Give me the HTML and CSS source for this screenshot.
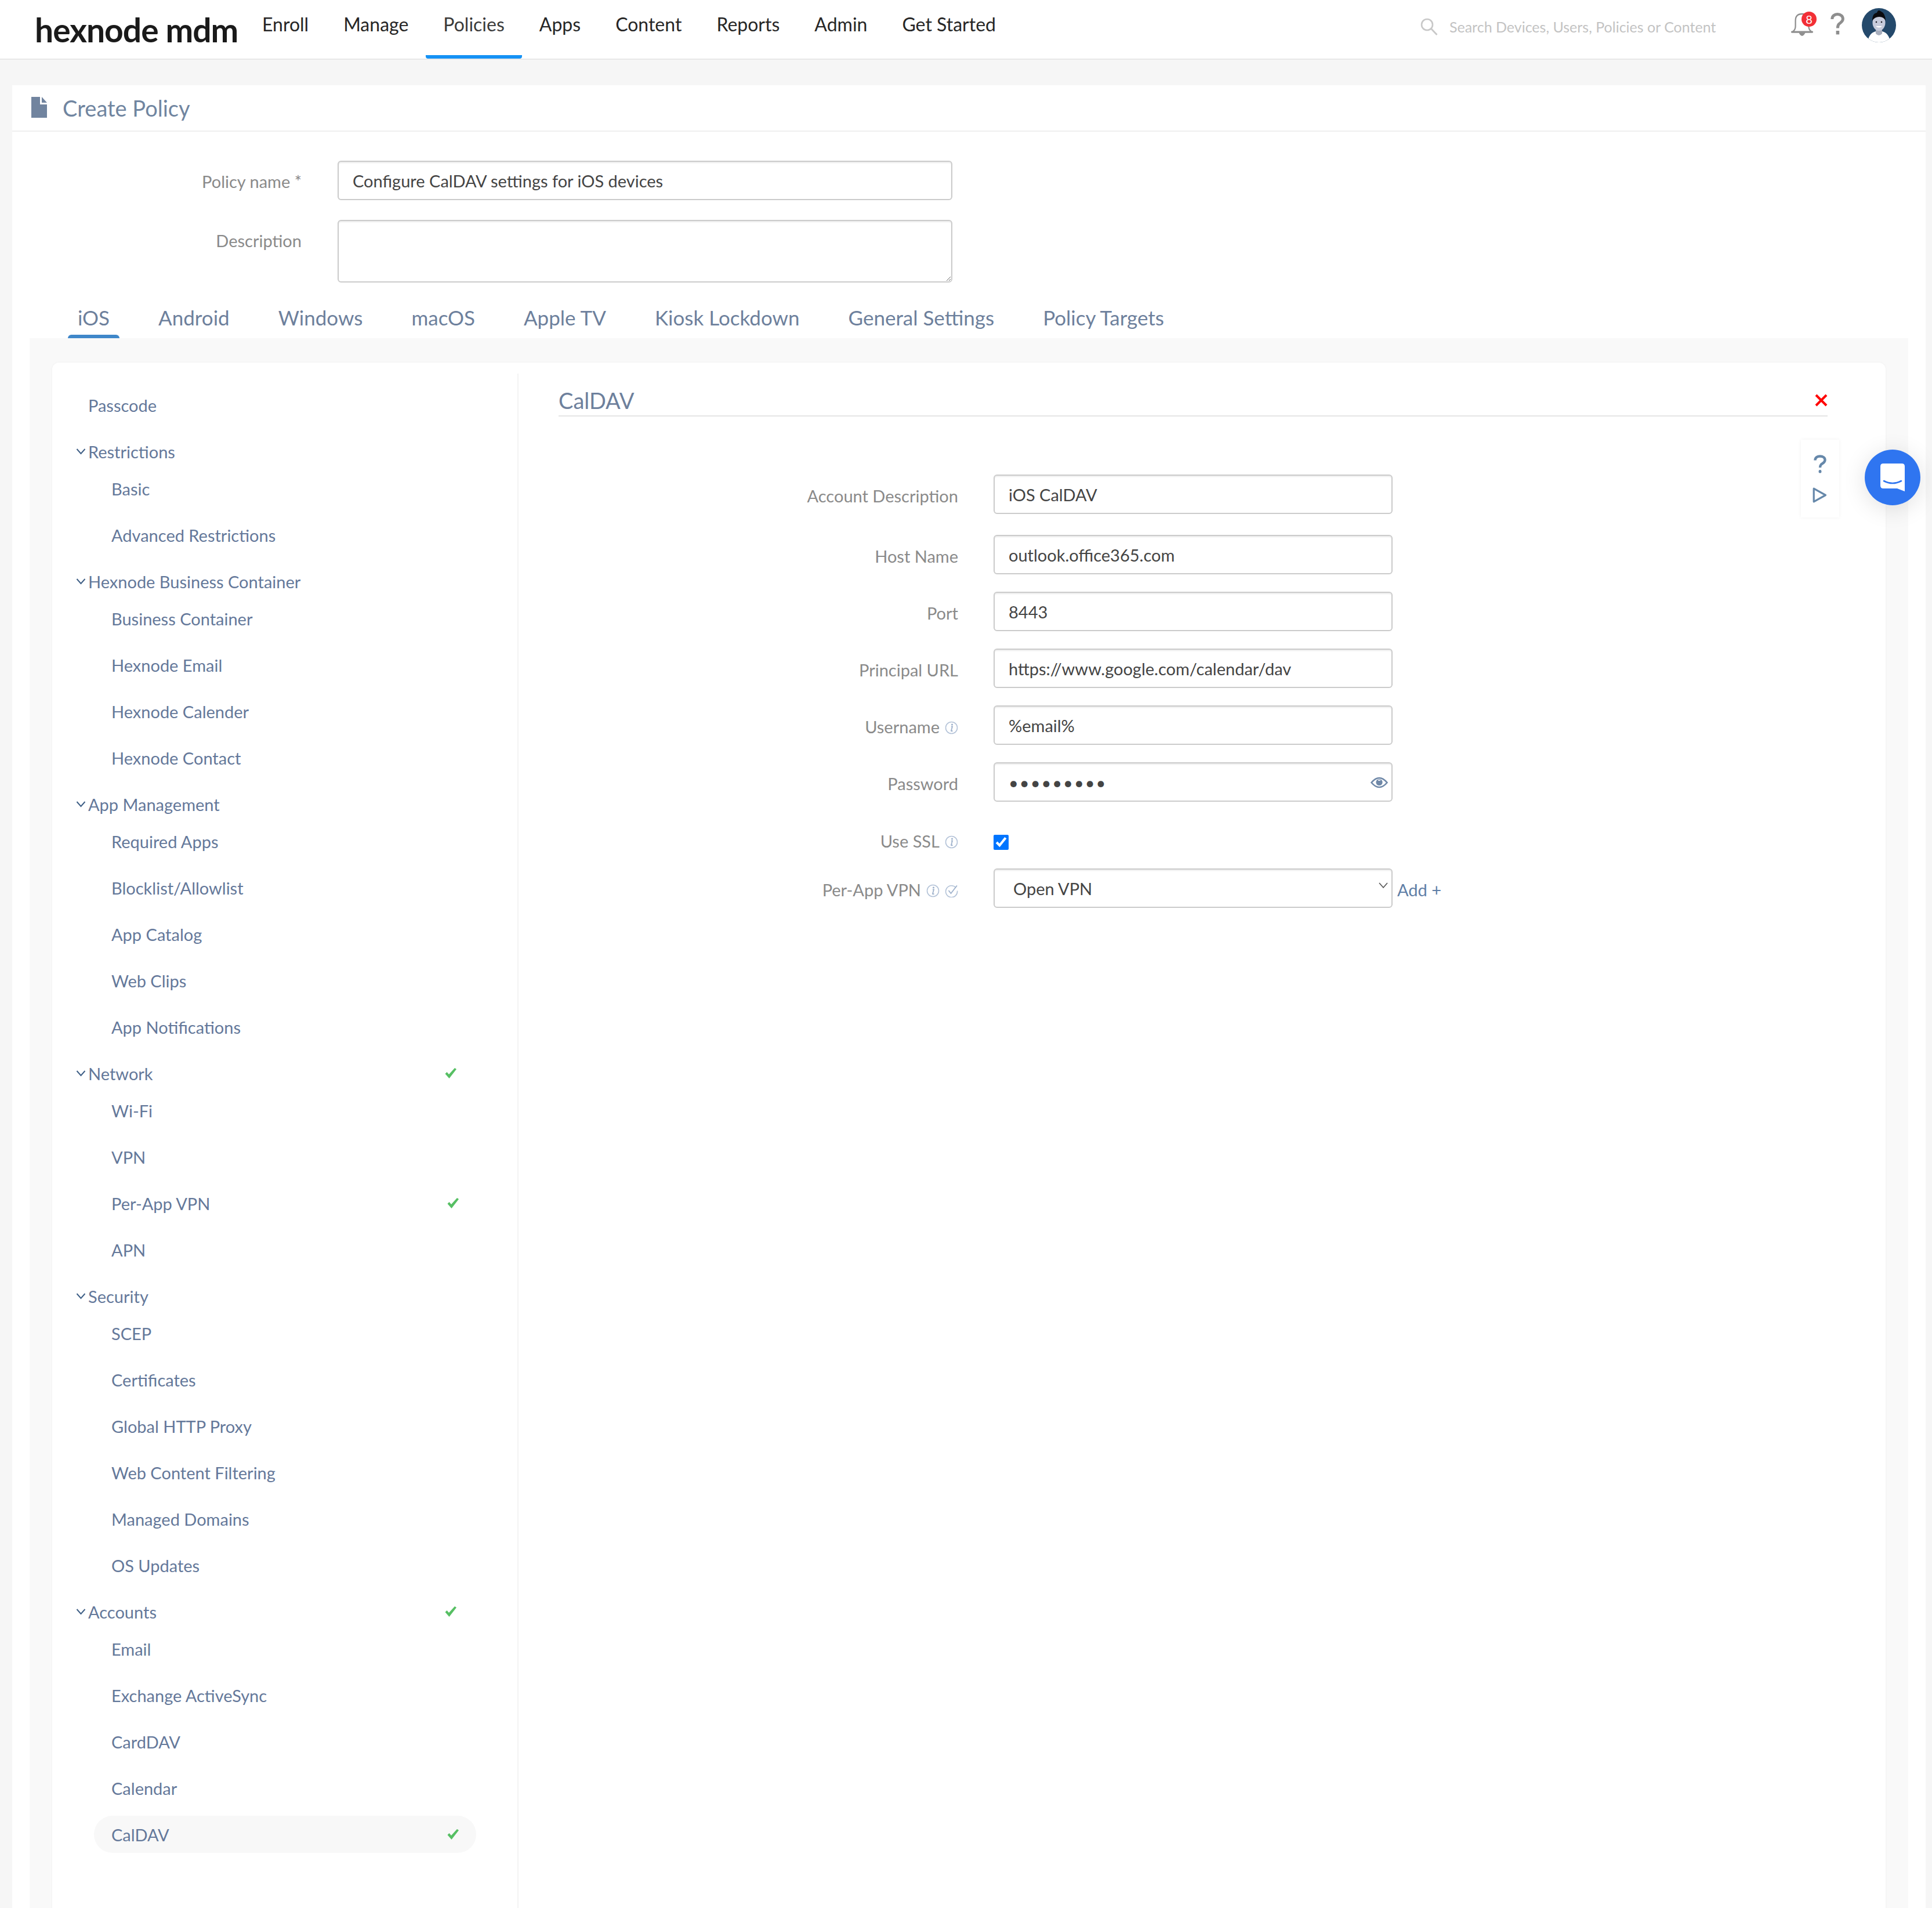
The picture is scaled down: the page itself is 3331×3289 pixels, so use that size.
FILE: index.html
```html
<!DOCTYPE html>
<html lang="en">
<head>
<meta charset="utf-8">
<title>Create Policy - hexnode mdm</title>
<link rel="stylesheet" href="styles.css">
</head>
<body>
<svg class="defs" width="0" height="0" aria-hidden="true">
  <symbol id="chev" viewBox="0 0 17 12"><path d="M1.5 2 L8.5 10 L15.5 2" fill="none" stroke="#3f5f86" stroke-width="2"/></symbol>
  <symbol id="tick" viewBox="0 0 22 20"><path d="M1.5 11 L4.5 8 L8 12 L18 1 L21 3 L8.5 19 Z" fill="#56bf63"/></symbol>
  <symbol id="info" viewBox="0 0 23 23"><circle cx="11.5" cy="11.5" r="10" fill="none" stroke="#b4c3d8" stroke-width="1.6"/><circle cx="12.5" cy="6" r="1.6" fill="#9fb2cc"/><path d="M11 9.5 L13 9.5 L11 16.5 Q10.8 18 13.5 16.6" fill="none" stroke="#9fb2cc" stroke-width="1.8"/></symbol>
  <symbol id="verify" viewBox="0 0 23 23"><path d="M19 6 A10 10 0 1 0 21.5 11.5" fill="none" stroke="#b4c3d8" stroke-width="1.6"/><path d="M6.5 11 L10.5 16 L21 2.5" fill="none" stroke="#9fb2cc" stroke-width="1.8"/></symbol>
</svg>

<header class="topbar">
  <div class="logo">hexnode mdm</div>
  <nav class="mainnav">
    <a class="navitem">Enroll</a>
    <a class="navitem">Manage</a>
    <a class="navitem active">Policies</a>
    <a class="navitem">Apps</a>
    <a class="navitem">Content</a>
    <a class="navitem">Reports</a>
    <a class="navitem">Admin</a>
    <a class="navitem">Get Started</a>
  </nav>
  <div class="search">
    <svg class="search-icon" viewBox="0 0 30 30"><circle cx="11.5" cy="11.5" r="9.5" fill="none" stroke="#c8c8c8" stroke-width="2.6"/><path d="M18.5 18.5 L28.5 29" stroke="#c8c8c8" stroke-width="2.8" fill="none"/></svg>
    <span class="search-text">Search Devices, Users, Policies or Content</span>
  </div>
  <div class="bell">
    <svg class="bell-icon" viewBox="0 0 40 44"><path d="M3 34 Q8 31 8 24 L8 14 Q8 2 20 2 Q32 2 32 14 L32 24 Q32 31 37 34" fill="none" stroke="#8f8f8f" stroke-width="2.4"/><rect x="0" y="33" width="40" height="3.4" rx="1.5" fill="#8f8f8f"/><path d="M14 36 Q20 48 26 36 Z" fill="#8f8f8f"/></svg>
    <span class="badge">8</span>
  </div>
  <svg class="help-top" viewBox="0 0 24 38"><path d="M2.8 11 C2.8 5.5 7 2.6 12 2.6 C17.5 2.6 21.4 6 21.4 10.6 C21.4 15.5 17 17 14.5 19.6 C13 21.2 12.4 23 12.4 26.5" fill="none" stroke="#8e8e8e" stroke-width="5"/><rect x="9.6" y="31" width="5.6" height="6.4" fill="#8e8e8e"/></svg>
  <svg class="avatar" viewBox="0 0 59 59">
    <defs><clipPath id="avc"><circle cx="29.5" cy="29.5" r="29.5"/></clipPath></defs>
    <g clip-path="url(#avc)">
      <rect width="59" height="59" fill="#24496b"/>
      <path d="M10 59 Q12 43 24 40 L35 40 Q47 43 49 59 Z" fill="#ffffff"/>
      <path d="M24 34 L35 34 L35 44 Q29.5 50 24 44 Z" fill="#a8aebd"/>
      <ellipse cx="29.5" cy="25" rx="11" ry="14" fill="#c6cbdc"/>
      <path d="M18 22 Q18 9 26 8 Q28 2 32 5 Q41 9 41 22 Q38 15 30 15 Q22 15 18 22 Z" fill="#0b0b0f"/>
      <circle cx="25" cy="24" r="1.3" fill="#1a1a22"/><circle cx="34" cy="24" r="1.3" fill="#1a1a22"/>
      <path d="M24 31 Q29.5 36 35 31 Z" fill="#ffffff"/>
    </g>
  </svg>
</header>

<main class="card">
  <div class="card-title">
    <svg class="doc-icon" viewBox="0 0 27 36"><path d="M0 0 L15 0 L15 13 L27 13 L27 36 L0 36 Z M18 0 L27 10 L18 10 Z" fill="#71849f"/></svg>
    <h1 class="title-text">Create Policy</h1>
  </div>

  <section class="policy-form">
    <div class="policy-row">
      <label class="policy-label">Policy name *</label>
      <input class="field policy-input" type="text" value="Configure CalDAV settings for iOS devices" readonly>
    </div>
    <div class="policy-row">
      <label class="policy-label">Description</label>
      <textarea class="field policy-area" readonly></textarea>
    </div>
  </section>

  <nav class="tabs">
    <a class="tab active">iOS</a>
    <a class="tab">Android</a>
    <a class="tab">Windows</a>
    <a class="tab">macOS</a>
    <a class="tab">Apple TV</a>
    <a class="tab">Kiosk Lockdown</a>
    <a class="tab">General Settings</a>
    <a class="tab">Policy Targets</a>
  </nav>

  <div class="panel">
    <div class="inner">
      <aside class="sidebar">
        <div class="group"><div class="heading plain">Passcode</div></div>

        <div class="group">
          <div class="heading"><svg class="chev"><use href="#chev"/></svg>Restrictions</div>
          <div class="item">Basic</div>
          <div class="item">Advanced Restrictions</div>
        </div>

        <div class="group">
          <div class="heading"><svg class="chev"><use href="#chev"/></svg>Hexnode Business Container</div>
          <div class="item">Business Container</div>
          <div class="item">Hexnode Email</div>
          <div class="item">Hexnode Calender</div>
          <div class="item">Hexnode Contact</div>
        </div>

        <div class="group">
          <div class="heading"><svg class="chev"><use href="#chev"/></svg>App Management</div>
          <div class="item">Required Apps</div>
          <div class="item">Blocklist/Allowlist</div>
          <div class="item">App Catalog</div>
          <div class="item">Web Clips</div>
          <div class="item">App Notifications</div>
        </div>

        <div class="group">
          <div class="heading"><svg class="chev"><use href="#chev"/></svg>Network<svg class="tick"><use href="#tick"/></svg></div>
          <div class="item">Wi-Fi</div>
          <div class="item">VPN</div>
          <div class="item">Per-App VPN<svg class="tick"><use href="#tick"/></svg></div>
          <div class="item">APN</div>
        </div>

        <div class="group">
          <div class="heading"><svg class="chev"><use href="#chev"/></svg>Security</div>
          <div class="item">SCEP</div>
          <div class="item">Certificates</div>
          <div class="item">Global HTTP Proxy</div>
          <div class="item">Web Content Filtering</div>
          <div class="item">Managed Domains</div>
          <div class="item">OS Updates</div>
        </div>

        <div class="group">
          <div class="heading"><svg class="chev"><use href="#chev"/></svg>Accounts<svg class="tick"><use href="#tick"/></svg></div>
          <div class="item">Email</div>
          <div class="item">Exchange ActiveSync</div>
          <div class="item">CardDAV</div>
          <div class="item">Calendar</div>
          <div class="item selected">CalDAV<svg class="tick"><use href="#tick"/></svg></div>
        </div>
      </aside>

      <section class="content">
        <div class="content-head">
          <h2 class="content-title">CalDAV</h2>
          <svg class="close" viewBox="0 0 22 22"><path d="M2 2 L20 20 M20 2 L2 20" stroke="#ff0000" stroke-width="4" fill="none"/></svg>
        </div>

        <div class="helpbox">
          <svg class="help-q" viewBox="0 0 22 32"><path d="M2.5 9.5 C2.5 4.5 6.5 2.5 11 2.5 C16 2.5 19.5 5 19.5 9 C19.5 13.5 15.5 14.5 13 16.5 C11.5 18 11 19.5 11 22" fill="none" stroke="#6688aa" stroke-width="4.4"/><rect x="8.6" y="26" width="4.8" height="5.6" rx="2" fill="#6688aa"/></svg>
          <svg class="help-play" viewBox="0 0 25 27"><path d="M2.2 2.2 L22.5 13.5 L2.2 24.8 Z" fill="none" stroke="#6688aa" stroke-width="3.2" stroke-linejoin="round"/></svg>
        </div>

        <div class="form">
          <div class="row first"><label class="label">Account Description</label><input class="field wide" type="text" value="iOS CalDAV" readonly></div>
          <div class="row"><label class="label">Host Name</label><input class="field wide" type="text" value="outlook.office365.com" readonly></div>
          <div class="row"><label class="label">Port</label><input class="field wide" type="text" value="8443" readonly></div>
          <div class="row"><label class="label">Principal URL</label><input class="field wide" type="text" value="https://www.google.com/calendar/dav" readonly></div>
          <div class="row"><label class="label">Username<svg class="hint"><use href="#info"/></svg></label><input class="field wide" type="text" value="%email%" readonly></div>
          <div class="row">
            <label class="label">Password</label>
            <div class="input-wrap">
              <input class="field wide pass" type="password" value="123456789" readonly>
              <svg class="eye" viewBox="0 0 30 24"><path d="M1.5 12 Q15 -4 28.5 12 Q15 28 1.5 12 Z" fill="none" stroke="#6f88a8" stroke-width="2.6"/><circle cx="15" cy="11.5" r="5.6" fill="#6f88a8"/><path d="M13 8 L17 8" stroke="#fff" stroke-width="1.6"/></svg>
            </div>
          </div>
          <div class="row ssl"><label class="label">Use SSL<svg class="hint"><use href="#info"/></svg></label><input class="check" type="checkbox" checked></div>
          <div class="row">
            <label class="label">Per-App VPN<svg class="hint"><use href="#info"/></svg><svg class="hint"><use href="#verify"/></svg></label>
            <div class="input-wrap">
              <select class="field wide select"><option>Open VPN</option></select>
              <svg class="sel-chev" viewBox="0 0 16 10"><path d="M1 1 L8 9 L15 1" fill="none" stroke="#555" stroke-width="1.6"/></svg>
            </div>
            <a class="add">Add +</a>
          </div>
        </div>
      </section>
    </div>
  </div>
</main>

<div class="chat">
  <svg class="chat-icon" viewBox="0 0 42 48"><path d="M5 0 L37 0 Q42 0 42 5 L42 48 L29 43 L5 43 Q0 43 0 38 L0 5 Q0 0 5 0 Z" fill="#ffffff"/><path d="M6 30 Q21 38 36 30" fill="none" stroke="#2f75f0" stroke-width="2.6" stroke-linecap="round"/></svg>
</div>
</body>
</html>
```
FILE: styles.css
```css
* { box-sizing: border-box; }
html, body { margin: 0; padding: 0; }
body {
  position: relative;
  width: 3331px;
  height: 3289px;
  overflow: hidden;
  background: #f6f6f6;
  font-family: Lato, "Liberation Sans", sans-serif;
}
.defs { position: absolute; }

/* top bar */
.topbar {
  height: 103px;
  display: flex;
  align-items: center;
  padding: 0 62px 0 60px;
  background: #fff;
  border-bottom: 2px solid #e8e8e8;
}
.logo {
  width: 332px;
  margin-right: 30px;
  font-size: 57px;
  font-weight: 700;
  letter-spacing: -1px;
  line-height: 84px;
  height: 84px;
  color: #1a1a1a;
  white-space: nowrap;
}
.mainnav { display: flex; height: 101px; }
.navitem {
  display: flex;
  align-items: center;
  padding: 0 30px 12px;
  font-size: 32px;
  color: #262626;
  border-bottom: 6px solid transparent;
}
.navitem.active { border-bottom-color: #1592f5; border-radius: 0 0 4px 4px; color: #3a3a3a; }
.search {
  margin-left: auto;
  width: 639px;
  display: flex;
  align-items: center;
  gap: 20px;
  padding-bottom: 10px;
}
.search-icon { width: 30px; height: 30px; }
.search-text { font-size: 25px; color: #c3c3c3; white-space: nowrap; }
.bell { position: relative; width: 38px; height: 44px; margin-bottom: 16px; }
.bell-icon { width: 38px; height: 44px; display: block; }
.badge {
  position: absolute;
  right: -6px;
  top: -1px;
  width: 26px;
  height: 26px;
  border-radius: 50%;
  background: #f22f36;
  color: #fff;
  font-size: 20px;
  line-height: 26px;
  text-align: center;
}
.help-top { width: 24px; height: 38px; margin: 0 30px 0 30px; margin-bottom: 20px; }
.avatar { width: 59px; height: 59px; margin-bottom: 14px; }

/* card */
.card {
  margin: 44px 11px 0 21px;
  background: #fff;
  height: 3142px;
}
.card-title {
  height: 80px;
  display: flex;
  align-items: center;
  padding-left: 33px;
  border-bottom: 2px solid #efefef;
}
.doc-icon { width: 27px; height: 36px; margin-right: 27px; margin-bottom: 2px; }
.title-text { margin: 0; font-size: 38px; font-weight: 400; color: #7085a0; }

.policy-form { padding-top: 50px; display: flex; flex-direction: column; gap: 30px; }
.policy-row { display: flex; align-items: flex-start; }
.policy-label {
  width: 499px;
  margin-right: 62px;
  text-align: right;
  font-size: 29px;
  line-height: 72px;
  color: #8a8a8a;
}
.field {
  border: 2px solid #cbcbcb;
  border-radius: 6px;
  background: #fff;
  box-shadow: inset 0 2px 2px rgba(0, 0, 0, .08);
  font-family: Lato, "Liberation Sans", sans-serif;
  font-size: 29px;
  color: #444;
  outline: none;
}
.policy-input { width: 1060px; height: 68px; padding: 0 24px; }
.policy-area { width: 1060px; height: 108px; resize: both; display: block; }

.tabs { display: flex; gap: 50px; height: 96px; padding-left: 96px; }
.tab {
  padding: 0 17px;
  height: 96px;
  line-height: 120px;
  font-size: 35px;
  color: #6d809c;
  white-space: nowrap;
}
.tab.active { position: relative; }
.tab.active::after {
  content: "";
  position: absolute;
  left: 0;
  right: 0;
  bottom: 0;
  height: 6px;
  background: #3f87c9;
  border-radius: 6px 6px 0 0;
}

.panel {
  margin: 0 30px;
  padding: 42px 39px 0;
  background: #f9f9f9;
  height: 2710px;
}
.inner {
  display: flex;
  height: 2700px;
  background: #fff;
  border-radius: 12px 12px 0 0;
  box-shadow: 0 0 4px rgba(0, 0, 0, .04);
  padding-top: 19px;
}

/* sidebar */
.sidebar {
  width: 804px;
  flex: none;
  padding-top: 22px;
  border-right: 2px solid #f3f3f3;
  font-size: 29px;
  color: #64789a;
}
.group { margin-bottom: 16px; }
.heading {
  height: 64px;
  width: 657px;
  margin-left: 41px;
  display: flex;
  align-items: center;
}
.heading.plain { padding-left: 21px; }
.chev { width: 17px; height: 12px; margin-right: 4px; }
.item {
  height: 64px;
  width: 659px;
  margin: 0 0 16px 72px;
  padding: 0 29px 0 30px;
  display: flex;
  align-items: center;
  border-radius: 32px;
}
.item.selected { background: #f8f8f8; }
.tick { width: 22px; height: 20px; margin-left: auto; }

/* content */
.content { position: relative; flex: 1; }
.content-head {
  height: 74px;
  margin: 0 100px 0 69px;
  padding-top: 20px;
  display: flex;
  align-items: center;
  justify-content: space-between;
  border-bottom: 2px solid #e5e5e5;
}
.content-title { margin: 0; font-size: 38px; font-weight: 400; color: #6d809c; }
.close { width: 22px; height: 22px; }

.helpbox {
  position: absolute;
  left: 2211px;
  top: 114px;
  width: 66px;
  height: 134px;
  background: #fff;
  box-shadow: 0 0 6px rgba(0, 0, 0, .06);
}
.help-q { position: absolute; left: 22px; top: 26px; width: 22px; height: 32px; }
.help-play { position: absolute; left: 20px; top: 82px; width: 25px; height: 27px; }

.form { padding-top: 100px; display: flex; flex-direction: column; gap: 30px; }
.row { display: flex; align-items: center; height: 68px; }
.row.first { margin-bottom: 6px; }
.row.ssl { height: 50px; margin: 10px 0 -5px; }
.label {
  width: 758px;
  margin-right: 61px;
  display: flex;
  align-items: center;
  justify-content: flex-end;
  font-size: 29px;
  color: #8a8a8a;
  padding-top: 4px;
}
.hint { width: 23px; height: 23px; margin-left: 9px; margin-top: 4px; }
.wide { width: 688px; height: 68px; padding: 0 24px; display: block; }
.input-wrap { position: relative; }
.pass { letter-spacing: 2px; }
.eye { position: absolute; right: 8px; top: 23px; width: 30px; height: 24px; }
.select { appearance: none; padding-left: 32px; }
.sel-chev { position: absolute; right: 8px; top: 24px; width: 16px; height: 10px; }
.check { width: 26px; height: 26px; margin: 10px 0 0; accent-color: #0075ff; }
.add { margin: 4px 0 0 8px; font-size: 29px; color: #5f7ea6; white-space: nowrap; }

/* chat */
.chat {
  position: absolute;
  left: 3215px;
  top: 775px;
  width: 96px;
  height: 96px;
  border-radius: 50%;
  background: #2f75f0;
  box-shadow: 0 6px 40px rgba(0, 0, 0, .12);
  display: flex;
  align-items: center;
  justify-content: center;
}
.chat-icon { width: 42px; height: 48px; }
```
